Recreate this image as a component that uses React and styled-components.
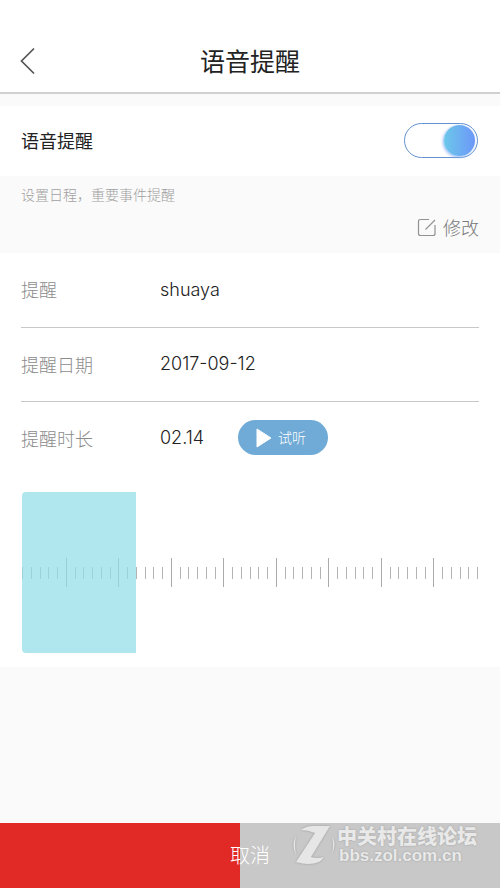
import React, { useState } from "react";
import styled, { createGlobalStyle } from "styled-components";

const GlobalStyle = createGlobalStyle`
  * { box-sizing: border-box; }
  body {
    margin: 0;
    background: #fafafa;
    color: #222;
    font-family: "Noto Sans CJK SC", sans-serif;
    font-weight: 300;
  }
  button { font: inherit; border: 0; padding: 0; background: none; cursor: pointer; }
`;

const Page = styled.div`
  display: flex;
  flex-direction: column;
  min-height: 100vh;
`;

const Header = styled.header`
  display: grid;
  grid-template-columns: 60px 1fr 60px;
  align-items: center;
  padding: 28px 0 0;
  height: 94px;
  background: #fff;
  border-bottom: 2px solid #d0d0d0;
`;

const BackButton = styled.button`
  display: flex;
  padding: 2px 0 0 20px;
`;

const Title = styled.h1`
  margin: 0;
  text-align: center;
  font-size: 25px;
  line-height: 36px;
  font-weight: 400;
`;

const SwitchRow = styled.label`
  display: flex;
  align-items: center;
  justify-content: space-between;
  height: 70px;
  margin-top: 12px;
  padding: 0 22px 2px 21px;
  background: #fff;
  font-size: 18px;
  font-weight: 400;
`;

const Switch = styled.input`
  appearance: none;
  display: flex;
  align-items: center;
  width: 74px;
  height: 35px;
  margin: 0;
  padding: 0 2px;
  border: 1px solid #6391cf;
  border-radius: 18px;
  background: #fff;
  cursor: pointer;

  &::before {
    content: "";
    width: 31px;
    height: 31px;
    border-radius: 50%;
    background: #ccc;
  }
  &:checked { justify-content: flex-end; }
  &:checked::before {
    background: linear-gradient(90deg, #6bc8ea, #6c97f8);
    box-shadow: -1px 1px 3px #8db5f5;
  }
`;

const Notes = styled.section`
  display: flex;
  flex-direction: column;
  height: 77px;
  padding: 8px 21px;
`;

const Hint = styled.p`
  margin: 0;
  font-size: 14px;
  line-height: 20px;
  color: #a0a0a0;
`;

const EditButton = styled.button`
  display: flex;
  align-items: center;
  align-self: flex-end;
  gap: 6px;
  margin-top: 9px;
  font-size: 18px;
  line-height: 28px;
  color: #777;
`;

const Details = styled.section`
  padding: 0 21px 14px;
  background: #fff;
`;

const List = styled.dl`
  margin: 0;
`;

const Row = styled.div`
  display: grid;
  grid-template-columns: 139px 1fr;
  align-items: center;
  height: 74px;
  padding-bottom: 2px;
  font-size: 18px;

  & + & { border-top: 1px solid #c8c8c8; }
`;

const Term = styled.dt`
  color: #8c8c8c;
`;

const Value = styled.dd`
  display: flex;
  align-items: center;
  gap: 34px;
  margin: 0;
  font-family: Inter, "Noto Sans CJK SC", sans-serif;
  color: #222;
`;

const PlayButton = styled.button`
  display: flex;
  align-items: center;
  gap: 6px;
  height: 35px;
  width: 90px;
  padding-left: 18px;
  border-radius: 18px;
  background: #6fabd6;
  color: #fff;
  font-family: "Noto Sans CJK SC", sans-serif;
  font-size: 14px;
  line-height: 20px;
`;

const PlayLabel = styled.span`
  padding-bottom: 2px;
`;

const Timeline = styled.div`
  position: relative;
  display: flex;
  align-items: center;
  height: 161px;
  margin: 17px 1px 0;
`;

const Ruler = styled.div`
  display: flex;
  flex: 1;
  align-items: center;
  justify-content: space-between;
`;

const Tick = styled.span`
  width: 1px;
  height: ${(p) => (p.$major ? 29 : 12)}px;
  background: ${(p) => (p.$major ? "#aaa" : "#b4b4b4")};
`;

const Selection = styled.div`
  position: absolute;
  inset: 0 auto 0 0;
  width: 25%;
  border-radius: 4px 0 0 4px;
  background: rgba(145, 220, 230, 0.72);
`;

const Footer = styled.footer`
  position: relative;
  display: flex;
  margin-top: auto;
`;

const CancelButton = styled.button`
  flex: 1;
  height: 65px;
  padding-bottom: 2px;
  background: linear-gradient(90deg, #e12a26 48%, #c8c8c8 48%);
  color: #fff;
  font-size: 20px;
`;

const Watermark = styled.div`
  position: absolute;
  top: 1px;
  right: 23px;
  display: flex;
  align-items: center;
  gap: 2px;
  color: #e9e9e9;
  pointer-events: none;
  text-shadow: 0 0 2px #999;
  svg { filter: drop-shadow(0 0 1px #999); }
`;

const WatermarkText = styled.div`
  display: flex;
  flex-direction: column;
  font-weight: 900;
  font-size: 20px;
  line-height: 22px;
`;

const WatermarkSite = styled.span`
  padding-left: 2px;
  font-family: "Liberation Sans", sans-serif;
  font-weight: 700;
  font-size: 17px;
  line-height: 18px;
`;

const ticks = Array.from({ length: 53 }, (_, i) => i % 6 === 5);

export default function App() {
  const [enabled, setEnabled] = useState(true);
  return (
    <>
      <GlobalStyle />
      <Page>
        <Header>
          <BackButton aria-label="返回">
            <svg width="16" height="28" viewBox="0 0 16 28" fill="none" stroke="#555" strokeWidth="1.7">
              <path d="M14 1.5 1.5 14 14 26.5" />
            </svg>
          </BackButton>
          <Title>语音提醒</Title>
        </Header>
        <SwitchRow>
          语音提醒
          <Switch
            type="checkbox"
            role="switch"
            checked={enabled}
            onChange={(e) => setEnabled(e.target.checked)}
          />
        </SwitchRow>
        <Notes>
          <Hint>设置日程，重要事件提醒</Hint>
          <EditButton>
            <svg width="20" height="20" viewBox="0 0 20 20" fill="none" stroke="#929292" strokeWidth="1.2">
              <path d="M12 2.500H3.500Q1.500 2.500 1.500 4.500v12q0 2 2 2h12.500q2 0 2-2V8M8.500 12.500 18 3" />
            </svg>
            修改
          </EditButton>
        </Notes>
        <Details>
          <List>
            <Row>
              <Term>提醒</Term>
              <Value>shuaya</Value>
            </Row>
            <Row>
              <Term>提醒日期</Term>
              <Value>2017-09-12</Value>
            </Row>
            <Row>
              <Term>提醒时长</Term>
              <Value>
                02.14
                <PlayButton>
                  <svg width="16" height="20" viewBox="0 0 16 20" fill="#fff" stroke="#fff" strokeLinejoin="round">
                    <path d="M1 1v18L15 10z" />
                  </svg>
                  <PlayLabel>试听</PlayLabel>
                </PlayButton>
              </Value>
            </Row>
          </List>
          <Timeline>
            <Ruler>
              {ticks.map((major, i) => (
                <Tick key={i} $major={major} />
              ))}
            </Ruler>
            <Selection />
          </Timeline>
        </Details>
        <Footer>
          <CancelButton>取消</CancelButton>
          <Watermark>
            <svg width="42" height="42" viewBox="0 0 42 42" fill="#e6e6e6">
              <path d="M8 6Q13 2 20 2H37L18 33q6 2 13 0-2 3-5 5-10 4-23 0L22 9Q15 6 8 6z" />
              <path d="M3 12q-5 9 0 19-2-10 0-19zM39 12q5 8 0 18 2-9 0-18z" />
            </svg>
            <WatermarkText>
              <span>中关村在线论坛</span>
              <WatermarkSite>bbs.zol.com.cn</WatermarkSite>
            </WatermarkText>
          </Watermark>
        </Footer>
      </Page>
    </>
  );
}
